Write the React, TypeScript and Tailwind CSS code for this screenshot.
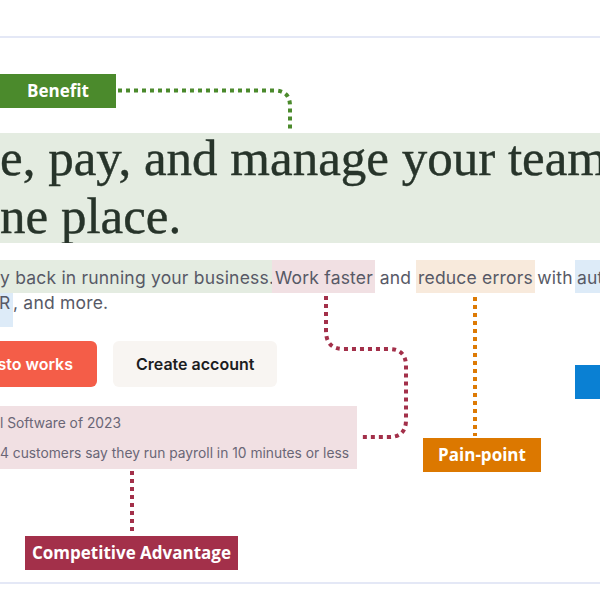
import React from 'react';

const sans = "font-['Inter','Liberation_Sans',sans-serif]";
const label = "font-['Open_Sans','Liberation_Sans',sans-serif] font-bold text-white flex items-center justify-center";

function Connectors() {
  // dotted annotation leaders, drawn over the page
  return (
    <svg className="absolute inset-0 pointer-events-none" width="600" height="600" viewBox="0 0 600 600" fill="none">
      <path d="M118 90.5 H274 Q290 90.5 290 106 V130" stroke="#4b8a2c" strokeWidth="4" strokeDasharray="4 4" />
      <path d="M326 296 V331 Q326 349 344 349 H389 Q406 349 406 366 V420 Q406 437 389 437 H362" stroke="#a3304a" strokeWidth="4" strokeDasharray="4 4" />
      <path d="M132 471 V532" stroke="#a3304a" strokeWidth="4" strokeDasharray="4 4" />
      <path d="M475 297 V436" stroke="#dd7a04" strokeWidth="4" strokeDasharray="4 4" />
    </svg>
  );
}

export default function App() {
  return (
    <div className="relative w-[600px] h-[600px] bg-white overflow-hidden">
      <div className="h-[36px]" />
      <div className="h-[2px] bg-[#e4e8f6]" />

      {/* Benefit tag */}
      <div className="mt-[36px] flex">
        <div className={`${label} w-[116px] h-[34px] bg-[#4b8a2c] text-[17px]`}>Benefit</div>
      </div>

      {/* Headline */}
      <div className="mt-[25px] h-[110px] bg-[#e4ece1] overflow-hidden">
        <div className="-mt-[4px] font-['Liberation_Serif','DejaVu_Serif',serif] text-[51px] leading-[58px] text-[#27342a] whitespace-nowrap [-webkit-text-stroke:0.4px_#27342a]">
          <div>e, pay, and manage your team all in</div>
          <div>ne place.</div>
        </div>
      </div>

      {/* Sub copy */}
      <div className={`mt-[17px] ${sans} text-[17.5px] tracking-[0.2px] text-[#575966]`}>
        <div className="flex h-[33px] items-center whitespace-nowrap">
          <span className="w-[272px] h-full flex items-center pt-[3px] bg-[#e4ece1]">y back in running your business.</span>
          <span className="w-[103px] h-full flex items-center pt-[3px] pl-[3px] bg-[#f1e0e3]">Work faster</span>
          <span className="w-[41px] h-full flex items-center pt-[3px] justify-center">and</span>
          <span className="w-[119px] h-full flex items-center pt-[3px] pl-[2px] bg-[#f8eadc]">reduce errors</span>
          <span className="w-[40px] h-full flex items-center pt-[3px] justify-center">with</span>
          <span className="flex-1 h-full flex items-center pt-[3px] pl-[2px] bg-[#ddebf8] overflow-hidden">automated</span>
        </div>
        <div className="flex h-[34px] items-start whitespace-nowrap leading-[20px]">
          <span className="w-[13px] h-full bg-[#ddebf8] overflow-hidden">
            <span className="block -ml-[1px]">R</span>
          </span>
          <span>, and more.</span>
        </div>
      </div>

      {/* CTAs */}
      <div className={`mt-[14px] flex items-start ${sans}`}>
        <button className="w-[97px] h-[46px] rounded-r-[6px] bg-[#f45d48] text-white text-[16px] font-semibold flex items-center justify-end pr-[24px] whitespace-nowrap overflow-hidden">
          usto works
        </button>
        <button className="ml-[16px] h-[46px] px-[23px] rounded-[6px] bg-[#f8f5f2] text-[#1c1d1f] text-[16px] font-semibold">
          Create account
        </button>
        <div className="ml-auto mt-[24px] w-[25px] h-[34px] bg-[#0a80d3]" />
      </div>

      {/* Social proof + pain point */}
      <div className="mt-[7px] flex items-start">
        <div className={`w-[357px] h-[63px] bg-[#f1e0e3] ${sans} text-[13.8px] text-[#6a6676] flex flex-col justify-center gap-[12px] whitespace-nowrap overflow-hidden`}>
          <div className="leading-[18px]">l Software of 2023</div>
          <div className="leading-[18px]">4 customers say they run payroll in 10 minutes or less</div>
        </div>
        <div className={`${label} ml-[66px] mt-[32px] w-[118px] h-[34px] bg-[#dc7800] text-[17px]`}>Pain-point</div>
      </div>

      <div className="mt-[64px] pl-[25px] flex">
        <div className={`${label} w-[213px] h-[34px] bg-[#a3304a] text-[17px]`}>Competitive Advantage</div>
      </div>

      <div className="mt-[12px] h-[2px] bg-[#e4e8f6]" />

      <Connectors />
    </div>
  );
}
